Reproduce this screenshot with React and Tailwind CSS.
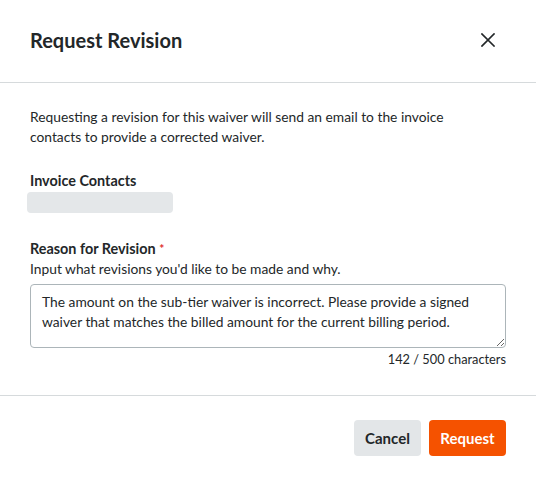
import React from "react";

export default function App() {
  return (
    <div className="w-[536px] h-[486px] bg-white text-[#232729]" style={{ fontFamily: "Lato, 'Noto Sans', sans-serif" }}>
      <div className="flex items-center justify-between h-[83px] pl-[30px] pr-[41px] pb-[2px] border-b border-[#d6dadc]">
        <h1 className="text-[20px] font-bold leading-[24px]">Request Revision</h1>
        <svg width="14" height="14" viewBox="0 0 14 14" className="text-[#232729]">
          <path d="M1 1 L13 13 M13 1 L1 13" stroke="currentColor" strokeWidth="1.7" strokeLinecap="square" />
        </svg>
      </div>
      <div className="px-[30px] pt-[24px] pb-[27px] border-b border-[#d6dadc]">
        <p className="w-[450px] text-[13.8px] leading-[20px]">
          Requesting a revision for this waiver will send an email to the invoice contacts to provide a corrected waiver.
        </p>
        <div className="mt-[24px]">
          <div className="text-[14.4px] font-bold leading-[20px]">Invoice Contacts</div>
          <div className="mt-[1px] -ml-[3px] w-[146px] h-[21px] rounded-[4px] bg-[#e4e7e9]"></div>
        </div>
        <div className="mt-[26px]">
          <div className="text-[14.4px] font-bold leading-[20px]">
            Reason for Revision <span className="text-[#e02c2c] align-top text-[12px]">*</span>
          </div>
          <div className="text-[13.8px] leading-[20px]">Input what revisions you'd like to be made and why.</div>
          <textarea
            className="mt-[5px] block w-[476px] h-[64px] rounded-[4px] border border-[#acb5b9] px-[11px] pt-[7px] pb-[4px] text-[13.8px] leading-[20px] text-[#232729] outline-none resize-y"
            style={{ fontFamily: "Lato, 'Noto Sans', sans-serif" }}
            defaultValue="The amount on the sub-tier waiver is incorrect. Please provide a signed waiver that matches the billed amount for the current billing period."
          />
          <div className="text-right text-[12.8px] leading-[18px] mt-[2px]">142 / 500 characters</div>
        </div>
      </div>
      <div className="flex justify-end gap-[8px] px-[30px] pt-[24px]">
        <button className="h-[36px] w-[67px] rounded-[4px] bg-[#e3e6e8] text-[15px] font-bold text-[#232729]">Cancel</button>
        <button className="h-[36px] w-[77px] rounded-[4px] bg-[#f55200] text-[15px] font-bold text-white">Request</button>
      </div>
    </div>
  );
}
